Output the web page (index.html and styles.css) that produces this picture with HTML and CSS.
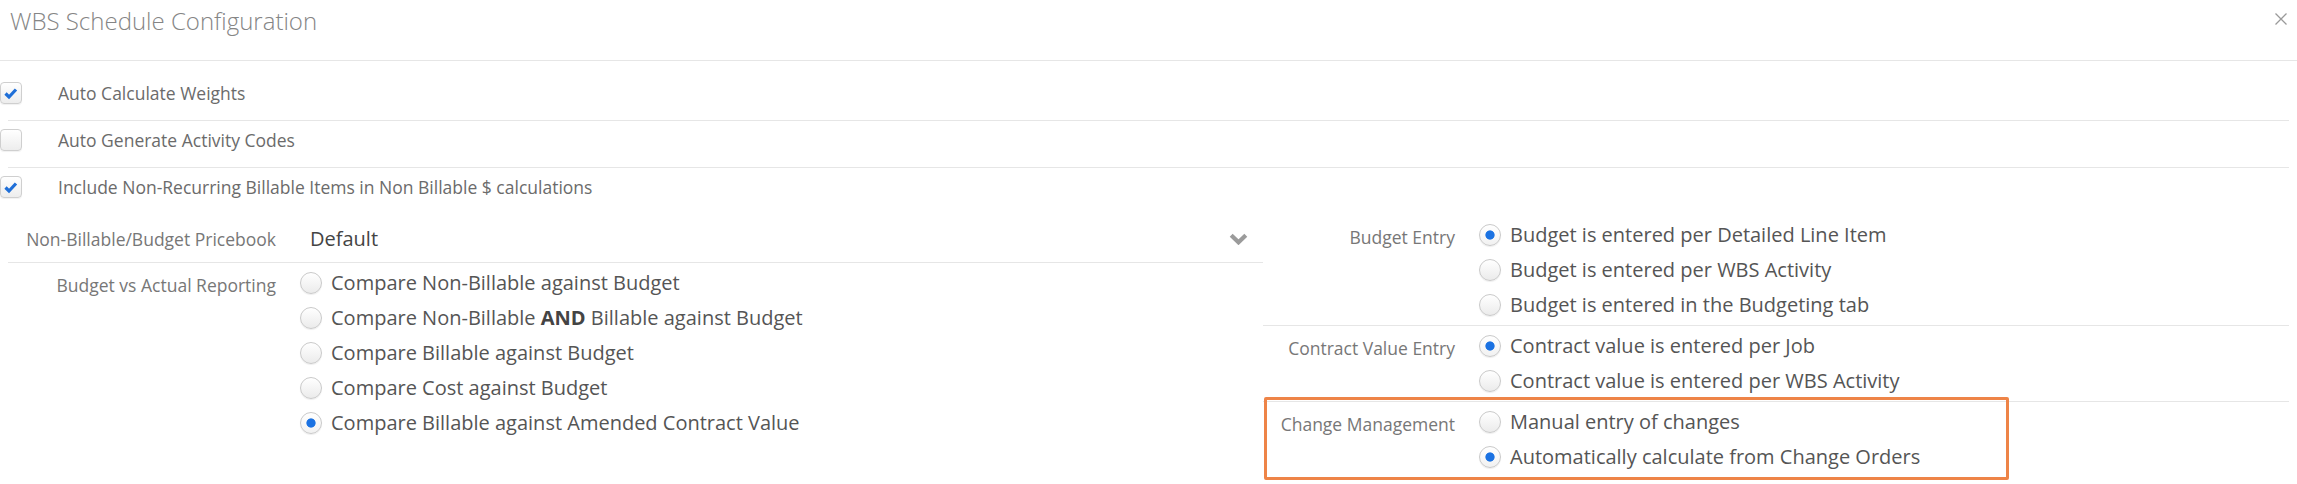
FILE: index.html
```html
<!DOCTYPE html>
<html lang="en">
<head>
<meta charset="utf-8">
<title>WBS Schedule Configuration</title>
<link rel="stylesheet" href="styles.css">
</head>
<body>
<div class="modal">
  <header class="modal-header">
    <h1 class="modal-title">WBS Schedule Configuration</h1>
    <button class="close" aria-label="Close">
      <svg width="12" height="12" viewBox="0 0 12 12"><path d="M0.5 0.5 L11.5 11.5 M11.5 0.5 L0.5 11.5" stroke="#9a9a9a" stroke-width="1.3" fill="none"/></svg>
    </button>
  </header>
  <div class="modal-body">
    <div class="checks">
      <div class="check-row">
        <span class="cb is-checked"><svg width="22" height="22" viewBox="0 0 22 22"><path d="M5.5 11.5 L9 15 L16 7.5" stroke="#1f6fd8" stroke-width="3.2" fill="none"/></svg></span>
        <span class="check-text">Auto Calculate Weights</span>
      </div>
      <div class="check-row">
        <span class="cb"></span>
        <span class="check-text">Auto Generate Activity Codes</span>
      </div>
      <div class="check-row">
        <span class="cb is-checked"><svg width="22" height="22" viewBox="0 0 22 22"><path d="M5.5 11.5 L9 15 L16 7.5" stroke="#1f6fd8" stroke-width="3.2" fill="none"/></svg></span>
        <span class="check-text">Include Non-Recurring Billable Items in Non Billable $ calculations</span>
      </div>
    </div>

    <div class="form-grid">
      <div class="col col-left">
        <div class="field field-select">
          <div class="field-label">Non-Billable/Budget Pricebook</div>
          <div class="select">
            <span class="select-value">Default</span>
            <svg class="chevron" width="19" height="12" viewBox="0 0 19 12"><path d="M2.2 2.2 L9.5 9.3 L16.8 2.2" stroke="#9b9b9b" stroke-width="4.2" fill="none"/></svg>
          </div>
        </div>
        <div class="field">
          <div class="field-label">Budget vs Actual Reporting</div>
          <div class="options">
            <div class="option"><span class="radio"></span><span class="option-text">Compare Non-Billable against Budget</span></div>
            <div class="option"><span class="radio"></span><span class="option-text">Compare Non-Billable <b>AND</b> Billable against Budget</span></div>
            <div class="option"><span class="radio"></span><span class="option-text">Compare Billable against Budget</span></div>
            <div class="option"><span class="radio"></span><span class="option-text">Compare Cost against Budget</span></div>
            <div class="option"><span class="radio is-checked"></span><span class="option-text">Compare Billable against Amended Contract Value</span></div>
          </div>
        </div>
      </div>

      <div class="col col-right">
        <div class="field field-group">
          <div class="field-label">Budget Entry</div>
          <div class="options">
            <div class="option"><span class="radio is-checked"></span><span class="option-text">Budget is entered per Detailed Line Item</span></div>
            <div class="option"><span class="radio"></span><span class="option-text">Budget is entered per WBS Activity</span></div>
            <div class="option"><span class="radio"></span><span class="option-text">Budget is entered in the Budgeting tab</span></div>
          </div>
        </div>
        <div class="field field-group">
          <div class="field-label">Contract Value Entry</div>
          <div class="options">
            <div class="option"><span class="radio is-checked"></span><span class="option-text">Contract value is entered per Job</span></div>
            <div class="option"><span class="radio"></span><span class="option-text">Contract value is entered per WBS Activity</span></div>
          </div>
        </div>
        <div class="field field-group field-last">
          <div class="field-label">Change Management</div>
          <div class="options">
            <div class="option"><span class="radio"></span><span class="option-text">Manual entry of changes</span></div>
            <div class="option"><span class="radio is-checked"></span><span class="option-text">Automatically calculate from Change Orders</span></div>
          </div>
          <div class="highlight-box"></div>
        </div>
      </div>
    </div>
  </div>
</div>
</body>
</html>
```

FILE: styles.css
```css
* {
  box-sizing: border-box;
}

html, body {
  margin: 0;
  padding: 0;
  background: #ffffff;
}

body {
  font-family: "Open Sans", "Liberation Sans", sans-serif;
  color: #555555;
  height: 484px;
  overflow: hidden;
}

.modal-header {
  height: 61px;
  border-bottom: 1px solid #e6e6e6;
  display: flex;
  justify-content: space-between;
  align-items: flex-start;
  padding: 7px 10px 0 10px;
}

.modal-title {
  margin: 0;
  font-size: 24px;
  font-weight: 300;
  line-height: 28px;
  color: #858585;
}

.close {
  border: none;
  background: none;
  padding: 0;
  margin-top: 6px;
  width: 12px;
  height: 12px;
  display: block;
}

.close svg {
  display: block;
}

.modal-body {
  padding: 13px 8px 0 8px;
}

/* checkbox rows */
.check-row {
  display: flex;
  align-items: flex-start;
  padding: 8px 0 16px;
  border-bottom: 1px solid #e6e6e6;
}

.check-row:last-child {
  border-bottom: none;
}

.cb {
  flex: none;
  width: 22px;
  height: 22px;
  margin-left: -8px;
  border: 1px solid #cfcfcf;
  border-radius: 4px;
  background: linear-gradient(#ffffff, #ededed);
  box-shadow: 0 1px 1px rgba(0, 0, 0, 0.06);
  position: relative;
}

.cb svg {
  position: absolute;
  left: -1px;
  top: -1px;
}

.check-text {
  margin-left: 36px;
  font-size: 17.5px;
  line-height: 22px;
  color: #6b6b6b;
}

/* form grid */
.form-grid {
  display: grid;
  grid-template-columns: 1255px 1fr;
  padding-top: 1px;
}

.field {
  display: flex;
  align-items: flex-start;
}

.field-label {
  flex: none;
  text-align: right;
  font-size: 17.5px;
  line-height: 22px;
  color: #777777;
  padding-top: 11px;
  padding-right: 24px;
}

.col-left .field-label {
  width: 292px;
}

.col-right .field-label {
  width: 216px;
}

.field-select {
  height: 48px;
  align-items: center;
  border-bottom: 1px solid #e6e6e6;
}

.field-select .field-label {
  padding-top: 0;
}

.select {
  flex: 1;
  display: flex;
  align-items: center;
  justify-content: space-between;
  padding: 0 15px 0 10px;
}

.select-value {
  font-size: 20px;
  line-height: 26px;
  color: #444444;
}

.chevron {
  display: block;
}

.options {
  padding: 2px 0 3px;
}

.option {
  display: flex;
  align-items: center;
  height: 35px;
}

.radio {
  flex: none;
  width: 22px;
  height: 22px;
  border-radius: 50%;
  border: 1px solid #cacaca;
  background: linear-gradient(#ffffff, #ebebeb);
  box-shadow: 0 1px 1px rgba(0, 0, 0, 0.07);
}

.radio.is-checked {
  background: radial-gradient(circle, #1b72e2 0, #1b72e2 4.2px, rgba(27, 114, 226, 0) 5px), linear-gradient(#ffffff, #f1f1f1);
}

.option-text {
  margin-left: 9px;
  font-size: 20px;
  line-height: 26px;
  color: #555555;
  white-space: nowrap;
}

.option-text b {
  font-weight: 700;
  color: #444444;
}

.field-group {
  border-bottom: 1px solid #e6e6e6;
}

.field-group.field-last {
  border-bottom: none;
  position: relative;
}

.highlight-box {
  position: absolute;
  left: 1px;
  top: -5px;
  width: 745px;
  height: 83px;
  border: 3px solid #ee8447;
  border-radius: 2px;
  pointer-events: none;
}
```
